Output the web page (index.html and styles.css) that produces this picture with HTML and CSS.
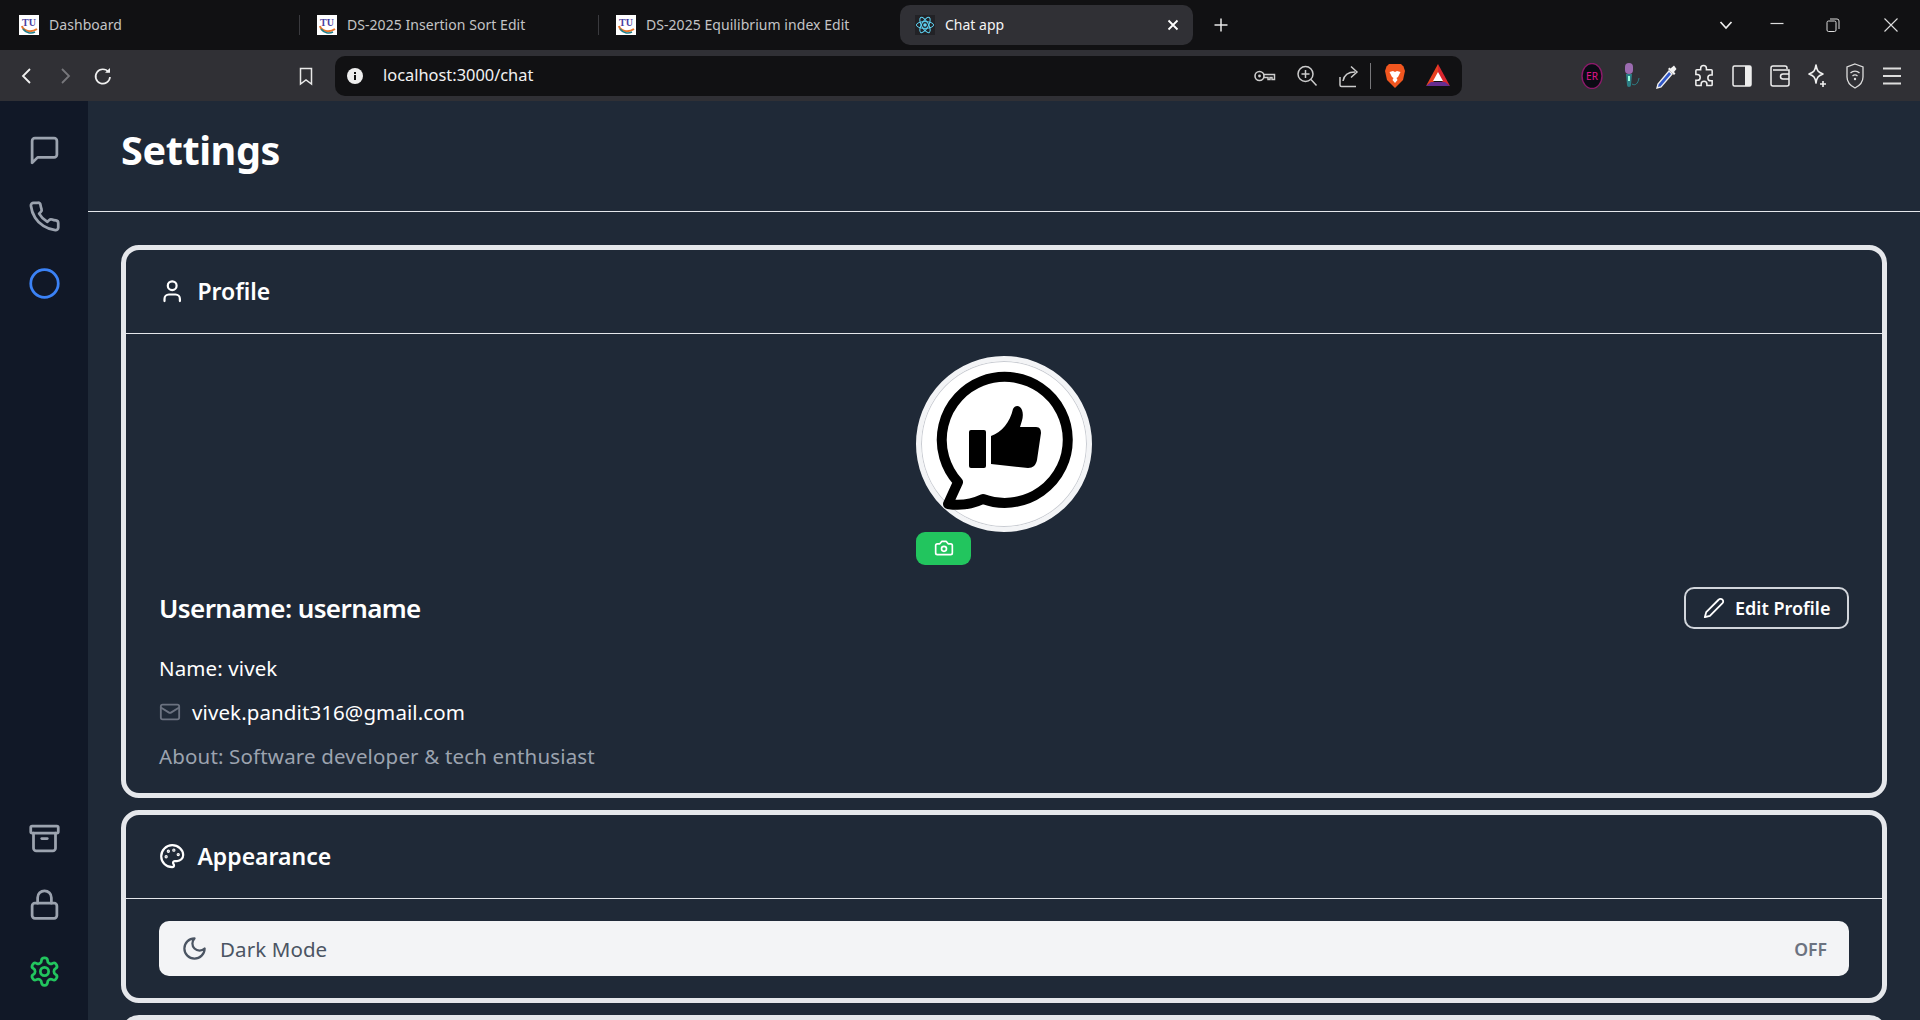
FILE: index.html
```html
<!DOCTYPE html>
<html lang="en">
<head>
    <meta charset="UTF-8">
    <meta name="viewport" content="width=device-width, initial-scale=1.0">
    <title>Chat app</title>
    <link rel="stylesheet" href="styles.css">
</head>
<body>

    <!-- browser tabs -->
    <div class="tabstrip">
        <div class="tab">
            <svg class="favicon" viewBox="0 0 20 20"><rect width="20" height="20" fill="#fff"/><text x="10" y="10.5" text-anchor="middle" class="tu">TU</text><path d="M3 11c1 5 9 7 15 3" fill="none" stroke="#e8742a" stroke-width="2"/><path d="M4 14c3 4 8 5 12 3" fill="none" stroke="#1f7f8c" stroke-width="1.6"/></svg>
            <span class="tab-title">Dashboard</span>
        </div>
        <div class="tab tab-sep">
            <svg class="favicon" viewBox="0 0 20 20"><rect width="20" height="20" fill="#fff"/><text x="10" y="10.5" text-anchor="middle" class="tu">TU</text><path d="M3 11c1 5 9 7 15 3" fill="none" stroke="#e8742a" stroke-width="2"/><path d="M4 14c3 4 8 5 12 3" fill="none" stroke="#1f7f8c" stroke-width="1.6"/></svg>
            <span class="tab-title">DS-2025 Insertion Sort Edit</span>
        </div>
        <div class="tab tab-sep">
            <svg class="favicon" viewBox="0 0 20 20"><rect width="20" height="20" fill="#fff"/><text x="10" y="10.5" text-anchor="middle" class="tu">TU</text><path d="M3 11c1 5 9 7 15 3" fill="none" stroke="#e8742a" stroke-width="2"/><path d="M4 14c3 4 8 5 12 3" fill="none" stroke="#1f7f8c" stroke-width="1.6"/></svg>
            <span class="tab-title">DS-2025 Equilibrium index Edit</span>
        </div>
        <div class="tab-active">
            <svg class="favicon" viewBox="0 0 20 20"><rect width="20" height="20" fill="#222226"/><g fill="none" stroke="#5ed3f3" stroke-width="1"><ellipse cx="10" cy="10" rx="8.6" ry="3.4"/><ellipse cx="10" cy="10" rx="8.6" ry="3.4" transform="rotate(60 10 10)"/><ellipse cx="10" cy="10" rx="8.6" ry="3.4" transform="rotate(120 10 10)"/></g><circle cx="10" cy="10" r="1.8" fill="#5ed3f3"/></svg>
            <span class="tab-title-active">Chat app</span>
            <svg class="tab-close" viewBox="0 0 12 12"><path d="M1.5 1.5l9 9M10.5 1.5l-9 9" stroke="#fff" stroke-width="1.8" fill="none"/></svg>
        </div>
        <svg class="tab-new" viewBox="0 0 16 16"><path d="M8 1.5v13M1.5 8h13" stroke="#e8e8e8" stroke-width="1.5" fill="none"/></svg>
        <div class="win-btns">
            <svg class="win-chevron" viewBox="0 0 14 14"><path d="M1.5 4l5.5 6 5.5-6" stroke="#eee" stroke-width="1.7" fill="none"/></svg>
            <svg class="win-min" viewBox="0 0 14 14"><path d="M0.5 5.5h13" stroke="#ddd" stroke-width="1.2" fill="none"/></svg>
            <svg class="win-restore" viewBox="0 0 14 14"><rect x="1" y="3" width="9" height="10.5" rx="1.5" stroke="#ddd" fill="none"/><path d="M4 1h7a2 2 0 0 1 2 2v8" stroke="#ddd" fill="none"/></svg>
            <svg class="win-close" viewBox="0 0 14 14"><path d="M0.5 0.5l13 13M13.5 0.5l-13 13" stroke="#ddd" stroke-width="1.1" fill="none"/></svg>
        </div>
    </div>

    <!-- browser toolbar -->
    <div class="toolbar">
        <div class="nav-btn"><svg width="20" height="20" viewBox="0 0 20 20"><path d="M13 3l-7 7 7 7" stroke="#f0f0f0" stroke-width="1.8" fill="none"/></svg></div>
        <div class="nav-btn"><svg width="20" height="20" viewBox="0 0 20 20"><path d="M7 3l7 7-7 7" stroke="#77777c" stroke-width="1.8" fill="none"/></svg></div>
        <div class="nav-btn"><svg width="20" height="20" viewBox="0 0 20 20"><path d="M15.5 6A7.2 7.2 0 1 0 17 11" stroke="#f0f0f0" stroke-width="1.7" fill="none"/><path d="M12 6.8h5V2z" fill="#f0f0f0"/></svg></div>
        <div class="nav-btn bookmark"><svg width="20" height="20" viewBox="0 0 20 20"><path d="M4.5 2.5h11v15.5L10 14l-5.500 4z" stroke="#e8e8e8" stroke-width="1.5" fill="none"/></svg></div>

        <div class="urlbar">
            <svg class="url-info" viewBox="0 0 16 16"><circle cx="8" cy="8" r="8" fill="#eee"/><rect x="7" y="7" width="2" height="5" fill="#111"/><rect x="7" y="4" width="2" height="2" fill="#111"/></svg>
            <span class="url-text">localhost:3000/chat</span>
            <div class="url-actions">
                <div class="url-btn"><svg width="22" height="14" viewBox="0 0 22 14"><circle cx="5.500" cy="7" r="4.500" stroke="#ccc" stroke-width="1.6" fill="none"/><circle cx="5.500" cy="7" r="1.400" fill="#ccc"/><path d="M10 5.500h10.500v5h-2.500v-2h-2v2h-2v-2H10" stroke="#ccc" stroke-width="1.500" fill="none"/></svg></div>
                <div class="url-btn"><svg width="22" height="22" viewBox="0 0 22 22"><circle cx="9.500" cy="9" r="7.500" stroke="#ccc" stroke-width="1.500" fill="none"/><path d="M15 14.500l5.500 6M9.500 5v8M5.500 9h8" stroke="#ccc" stroke-width="1.500" fill="none"/></svg></div>
                <div class="url-btn"><svg width="22" height="24" viewBox="0 0 22 24"><path d="M2 13v8a1.500 1.500 0 0 0 1.500 1.500H18" stroke="#ccc" stroke-width="1.500" fill="none"/><path d="M5 17c1-6 5-9 12-9M13 2.500L19 8l-6 5.500" stroke="#ccc" stroke-width="1.500" fill="none"/></svg></div>
                <div class="url-divider"></div>
                <div class="url-btn brave"><svg width="20" height="25" viewBox="0 0 20 25"><path d="M4 1h12l2.500 2.500L20 8l-2 9-8 8-8-8L0 8l1.500-4.500z" fill="#f1561f"/><path d="M4.500 9L8 8l2 1 2-1 3.500 1L13 14l-1.500 1 1 2L10 20l-2.500-3 1-2L7 14z" fill="#fff"/></svg></div>
                <div class="url-btn bat"><svg width="24" height="23" viewBox="0 0 24 23"><path d="M12 0L0 22l12-7z" fill="#e8401f"/><path d="M12 0l12 22-12-7z" fill="#d9252e"/><path d="M12 8l-5 9h10z" fill="#fff"/><path d="M0 22h24l-5-4H5z" fill="#662d91"/></svg></div>
            </div>
        </div>

        <div class="ext-icons">
            <div class="ext"><svg width="22" height="26" viewBox="0 0 22 26"><ellipse cx="11" cy="13" rx="10" ry="12.500" fill="#0b0b14" stroke="#8c1a6a" stroke-width="1.400"/><text x="11" y="17" text-anchor="middle" class="er">ER</text></svg></div>
            <div class="ext ext-mic"><svg width="18" height="27" viewBox="0 0 18 27"><rect x="2" y="1" width="8" height="11" rx="4" fill="#9b6bb0"/><path d="M3 12h6l-1 11a2 2 0 0 1-4 0z" fill="#2c7f86"/><path d="M9 22c3 2 6 0 7-6" stroke="#2c7f86" fill="none"/><rect x="5" y="14" width="2" height="5" fill="#9fd"/></svg></div>
            <div class="ext"><svg width="22" height="26" viewBox="0 0 22 26"><path d="M13 8l-11 13-1 4 4-1L16 11z" fill="#2f56c7" stroke="#eee" stroke-width="1.400"/><path d="M12 6l6 6 1.500-1.500-1.500-1.500 2.500-3-2.500-3.500-3.500 3-1-1z" fill="#f2f2f2"/></svg></div>
            <div class="ext"><svg width="23" height="26" viewBox="0 0 24 24"><path d="M8 4a3 3 0 0 1 6 0v1.500h5a1 1 0 0 1 1 1V11h-1.500a3 3 0 0 0 0 6H20v4a1 1 0 0 1-1 1h-4.500v-1.500a3 3 0 0 0-6 0V22H4a1 1 0 0 1-1-1v-4.500h1.500a3 3 0 0 0 0-6H3V6.500a1 1 0 0 1 1-1h4z" stroke="#f0f0f0" stroke-width="1.600" fill="none"/></svg></div>
            <div class="ext"><svg width="20" height="22" viewBox="0 0 20 22"><rect x="1" y="1" width="18" height="20" rx="1.500" stroke="#eee" stroke-width="1.500" fill="none"/><rect x="13" y="1" width="6" height="20" fill="#eee"/></svg></div>
            <div class="ext"><svg width="20" height="22" viewBox="0 0 20 22"><path d="M17 4V3a2 2 0 0 0-2-2H3a2 2 0 0 0-2 2v16a2 2 0 0 0 2 2h14a2 2 0 0 0 2-2V5H3" stroke="#eee" stroke-width="1.500" fill="none"/><path d="M19 9h-6a2.500 2.500 0 0 0 0 5h6" stroke="#eee" stroke-width="1.500" fill="none"/></svg></div>
            <div class="ext"><svg width="20" height="24" viewBox="0 0 20 24"><path d="M9 1c1 6 2 7 7 9-5 2-6 3-7 9-1-6-2-7-7-9 5-2 6-3 7-9z" stroke="#f0f0f0" stroke-width="1.600" fill="none" stroke-linejoin="round"/><path d="M16 17v6M13 20h6" stroke="#f0f0f0" stroke-width="1.600"/></svg></div>
            <div class="ext"><svg width="18" height="26" viewBox="0 0 18 26"><path d="M9 1l8 3v10c0 5-4 9-8 11-4-2-8-6-8-11V4z" stroke="#ddd" stroke-width="1.300" fill="none"/><path d="M4.500 10c2.500-2.500 6.500-2.500 9 0M6.500 13c1.500-1.300 3.500-1.300 5 0" stroke="#ddd" stroke-width="1.300" fill="none"/><circle cx="9" cy="16" r="1.200" fill="#ddd"/></svg></div>
            <div class="ext"><svg width="18" height="20" viewBox="0 0 18 20"><path d="M0 2.500h18M0 10h18M0 17.500h18" stroke="#ddd" stroke-width="2" fill="none"/></svg></div>
        </div>
    </div>

    <div class="app">

        <div class="sidebar">
            <div class="side-group">
                <svg class="side-icon" viewBox="0 0 24 24"><path d="M21 15a2 2 0 0 1-2 2H7l-4 4V5a2 2 0 0 1 2-2h14a2 2 0 0 1 2 2z"/></svg>
                <svg class="side-icon" viewBox="0 0 24 24"><path d="M22 16.920v3a2 2 0 0 1-2.180 2 19.790 19.790 0 0 1-8.630-3.070 19.500 19.500 0 0 1-6-6 19.790 19.790 0 0 1-3.070-8.670A2 2 0 0 1 4.110 2h3a2 2 0 0 1 2 1.720 12.840 12.840 0 0 0 .7 2.810 2 2 0 0 1-.45 2.110L8.090 9.910a16 16 0 0 0 6 6l1.270-1.270a2 2 0 0 1 2.110-.45 12.840 12.840 0 0 0 2.810.7A2 2 0 0 1 22 16.920z"/></svg>
                <svg class="side-icon side-blue" viewBox="0 0 24 24"><circle cx="12" cy="12" r="10"/></svg>
            </div>
            <div class="side-group">
                <svg class="side-icon" viewBox="0 0 24 24"><rect x="2" y="3" width="20" height="5" rx="1"/><path d="M4 8v11a2 2 0 0 0 2 2h12a2 2 0 0 0 2-2V8"/><path d="M10 12h4"/></svg>
                <svg class="side-icon" viewBox="0 0 24 24"><rect x="3" y="11" width="18" height="11" rx="2"/><path d="M7 11V7a5 5 0 0 1 10 0v4"/></svg>
                <svg class="side-icon side-green" viewBox="0 0 24 24"><path d="M12.220 2h-.44a2 2 0 0 0-2 2v.18a2 2 0 0 1-1 1.730l-.43.25a2 2 0 0 1-2 0l-.15-.08a2 2 0 0 0-2.730.73l-.22.38a2 2 0 0 0 .73 2.730l.15.1a2 2 0 0 1 1 1.720v.51a2 2 0 0 1-1 1.740l-.15.09a2 2 0 0 0-.73 2.730l.22.38a2 2 0 0 0 2.730.73l.15-.08a2 2 0 0 1 2 0l.43.25a2 2 0 0 1 1 1.730V20a2 2 0 0 0 2 2h.44a2 2 0 0 0 2-2v-.18a2 2 0 0 1 1-1.730l.43-.25a2 2 0 0 1 2 0l.15.08a2 2 0 0 0 2.730-.73l.22-.39a2 2 0 0 0-.73-2.730l-.15-.08a2 2 0 0 1-1-1.740v-.5a2 2 0 0 1 1-1.740l.15-.09a2 2 0 0 0 .73-2.730l-.22-.38a2 2 0 0 0-2.730-.73l-.15.08a2 2 0 0 1-2 0l-.43-.25a2 2 0 0 1-1-1.730V4a2 2 0 0 0-2-2z"/><circle cx="12" cy="12" r="3"/></svg>
            </div>
        </div>

        <div class="main">
            <div class="page-head">
                <h1 class="page-title">Settings</h1>
            </div>

            <div class="cards">

                <section class="card">
                    <div class="card-head">
                        <svg class="head-icon" viewBox="0 0 24 24"><path d="M19 21v-2a4 4 0 0 0-4-4H9a4 4 0 0 0-4 4v2"/><circle cx="12" cy="7" r="4"/></svg>
                        <h2 class="card-title">Profile</h2>
                    </div>
                    <div class="profile-body">
                        <div class="avatar-wrap">
                            <div class="avatar">
                                <svg width="166" height="166" viewBox="5 5 166 166">
                                    <path d="M42 126.100A63 63 0 1 1 67 143Q50 151 32 148Z" fill="none" stroke="#000" stroke-width="10" stroke-linejoin="round"/>
                                    <rect x="53" y="74" width="17" height="38" rx="2" fill="#000"/>
                                    <path d="M75 80C86 76 94 66 97 53C99 49 104 49 106 54C108 60 106 65 104 71L120 71C124 71 125 74 125 77L121 104C120 109 117 112 112 112L75 108Z" fill="#000"/>
                                </svg>
                            </div>
                            <button class="camera-btn">
                                <svg class="cam-icon" viewBox="0 0 24 24"><path d="M14.500 4h-5L7 7H4a2 2 0 0 0-2 2v9a2 2 0 0 0 2 2h16a2 2 0 0 0 2-2V9a2 2 0 0 0-2-2h-3l-2.500-3z"/><circle cx="12" cy="13" r="3"/></svg>
                            </button>
                        </div>

                        <div class="user-row">
                            <h3 class="username">Username: username</h3>
                            <button class="edit-btn">
                                <svg class="edit-icon" viewBox="0 0 24 24"><path d="M17 3a2.850 2.830 0 1 1 4 4L7.500 20.500 2 22l1.500-5.500L17 3z"/></svg>
                                Edit Profile
                            </button>
                        </div>

                        <p class="info-line">Name: vivek</p>
                        <p class="info-line">
                            <svg class="mail-icon" viewBox="0 0 24 24"><rect x="2" y="4" width="20" height="16" rx="2"/><path d="m22 7-8.970 5.700a1.940 1.940 0 0 1-2.060 0L2 7"/></svg>
                            vivek.pandit316@gmail.com
                        </p>
                        <p class="info-line info-muted">About: Software developer &amp; tech enthusiast</p>
                    </div>
                </section>

                <section class="card">
                    <div class="card-head">
                        <svg class="head-icon" viewBox="0 0 24 24"><circle cx="13.500" cy="6.500" r=".5" fill="#fff"/><circle cx="17.500" cy="10.500" r=".5" fill="#fff"/><circle cx="8.500" cy="7.500" r=".5" fill="#fff"/><circle cx="6.500" cy="12.500" r=".5" fill="#fff"/><path d="M12 2C6.500 2 2 6.500 2 12s4.500 10 10 10c.926 0 1.648-.746 1.648-1.688 0-.437-.18-.835-.437-1.125-.29-.289-.438-.652-.438-1.125a1.640 1.640 0 0 1 1.668-1.668h1.996c3.051 0 5.555-2.503 5.555-5.554C21.965 6.012 17.461 2 12 2z"/></svg>
                        <h2 class="card-title">Appearance</h2>
                    </div>
                    <div class="appearance-body">
                        <div class="toggle-row">
                            <svg class="moon-icon" viewBox="0 0 24 24"><path d="M12 3a6 6 0 0 0 9 9 9 9 0 1 1-9-9Z"/></svg>
                            <span class="toggle-label">Dark Mode</span>
                            <span class="toggle-state">OFF</span>
                        </div>
                    </div>
                </section>

                <section class="card card-empty"></section>

            </div>
        </div>

    </div>

</body>
</html>
```

FILE: styles.css
```css
* {
    margin: 0;
    padding: 0;
    box-sizing: border-box;
}
html, body {
    width: 100%;
    height: 100%;
    overflow: hidden;
}
body {
    display: flex;
    flex-direction: column;
    font-family: "Noto Sans", "Open Sans", sans-serif;
    background-color: #1f2937;
    color: #fff;
}

/* browser chrome */
.tabstrip {
    height: 50px;
    flex-shrink: 0;
    display: flex;
    align-items: center;
    background-color: #111113;
    font-size: 14px;
    color: #c4c4c6;
}
.tab {
    width: 299px;
    height: 20px;
    display: flex;
    align-items: center;
    padding-left: 19px;
}
.tab-sep {
    border-left: 1px solid #3a3a3e;
    padding-left: 17px;
}
.favicon {
    width: 20px;
    height: 20px;
    flex-shrink: 0;
}
.tu {
    font-family: "Liberation Serif", serif;
    font-size: 10px;
    font-weight: bold;
    fill: #4a3f9f;
}
.tab-title {
    margin-left: 10px;
    margin-bottom: 2px;
    letter-spacing: 0.05px;
}
.tab-active {
    width: 293px;
    height: 40px;
    margin-left: 3px;
    padding: 0 14px 0 15px;
    display: flex;
    align-items: center;
    background-color: #303035;
    border-radius: 10px;
    color: #f4f4f4;
}
.tab-title-active {
    margin-left: 10px;
    margin-bottom: 2px;
    flex: 1;
}
.tab-close {
    width: 12px;
    height: 12px;
}
.tab-new {
    width: 16px;
    height: 16px;
    margin-left: 20px;
}
.win-btns {
    display: flex;
    align-items: center;
    margin-left: auto;
}
.win-chevron {
    width: 14px;
    height: 14px;
    margin-right: 37px;
}
.win-min {
    width: 14px;
    height: 14px;
    margin-right: 42px;
}
.win-restore {
    width: 14px;
    height: 14px;
    margin-right: 44px;
}
.win-close {
    width: 14px;
    height: 14px;
    margin-right: 22px;
}

.toolbar {
    height: 51px;
    flex-shrink: 0;
    display: flex;
    align-items: center;
    padding: 0 9px 0 8px;
    background-color: #303035;
}
.nav-btn {
    width: 38px;
    height: 38px;
    display: flex;
    align-items: center;
    justify-content: center;
}
.bookmark {
    margin-left: 165px;
}
.urlbar {
    width: 1127px;
    height: 40px;
    margin-left: 10px;
    padding-left: 12px;
    padding-right: 5px;
    display: flex;
    align-items: center;
    background-color: #111113;
    border-radius: 10px;
}
.url-info {
    width: 16px;
    height: 16px;
}
.url-text {
    margin-left: 20px;
    margin-bottom: 2px;
    font-size: 16.4px;
    color: #f2f2f2;
}
.url-actions {
    margin-left: auto;
    display: flex;
    align-items: center;
}
.url-btn {
    width: 42px;
    display: flex;
    align-items: center;
    justify-content: center;
}
.url-divider {
    width: 1px;
    height: 26px;
    background-color: #77777a;
}
.brave {
    width: 48px;
}
.bat {
    width: 38px;
}
.ext-icons {
    margin-left: auto;
    display: flex;
    align-items: center;
}
.ext {
    width: 37.5px;
    display: flex;
    align-items: center;
    justify-content: center;
}
.ext-mic {
    padding-left: 5px;
}
.er {
    font-size: 10px;
    fill: #e0148c;
}

/* the app */
.app {
    flex: 1;
    min-height: 0;
    display: flex;
}
.sidebar {
    width: 88px;
    flex-shrink: 0;
    display: flex;
    flex-direction: column;
    justify-content: space-between;
    align-items: center;
    padding: 32.5px 0;
    background-color: #111827;
}
.side-group {
    display: flex;
    flex-direction: column;
    gap: 33.5px;
}
.side-icon {
    display: block;
    width: 33px;
    height: 33px;
    fill: none;
    stroke: #9ca3af;
    stroke-width: 2;
    stroke-linecap: round;
    stroke-linejoin: round;
}
.side-blue {
    stroke: #3b82f6;
}
.side-green {
    stroke: #22c55e;
}

.main {
    flex: 1;
    min-width: 0;
}
.page-head {
    height: 111px;
    display: flex;
    align-items: center;
    padding: 0 33px 12px;
    border-bottom: 1px solid #e5e7eb;
}
.page-title {
    font-size: 39.6px;
    font-weight: 700;
    letter-spacing: -0.4px;
}
.cards {
    display: flex;
    flex-direction: column;
    gap: 12px;
    padding: 33px 33px 0;
}
.card {
    border: 5px solid #e5e7eb;
    border-radius: 18px;
}
.card-empty {
    height: 100px;
}
.card-head {
    height: 84px;
    display: flex;
    align-items: center;
    gap: 12px;
    padding: 0 33px;
    border-bottom: 1px solid #e5e7eb;
}
.head-icon {
    width: 26.4px;
    height: 26.4px;
    fill: none;
    stroke: #fff;
    stroke-width: 2;
    stroke-linecap: round;
    stroke-linejoin: round;
}
.card-title {
    margin-bottom: 2px;
    font-size: 23px;
    font-weight: 600;
}

.profile-body {
    padding: 22px 33px 15px;
}
.avatar-wrap {
    width: 176px;
    margin: 0 auto;
}
.avatar {
    width: 176px;
    height: 176px;
    display: flex;
    align-items: center;
    justify-content: center;
    border-radius: 50%;
    background-color: #fff;
    border: 5px solid #f3f4f6;
    box-shadow: inset 0 0 0 1px #c9ccd2;
}
.camera-btn {
    width: 55px;
    height: 33px;
    display: flex;
    align-items: center;
    justify-content: center;
    border: none;
    border-radius: 9px;
    background-color: #22c55e;
}
.cam-icon {
    width: 20px;
    height: 20px;
    margin-bottom: 2px;
    fill: none;
    stroke: #fff;
    stroke-width: 2;
    stroke-linecap: round;
    stroke-linejoin: round;
}
.user-row {
    display: flex;
    align-items: center;
    justify-content: space-between;
    margin-top: 22px;
    margin-bottom: 17px;
}
.username {
    font-size: 26px;
    font-weight: 600;
    letter-spacing: -0.6px;
}
.edit-btn {
    width: 165px;
    height: 42px;
    display: flex;
    align-items: center;
    gap: 10px;
    padding-left: 17px;
    background: none;
    border: 2px solid #d1d5db;
    border-radius: 10px;
    color: #fff;
    font-family: inherit;
    font-size: 18px;
    font-weight: 600;
}
.edit-icon {
    width: 22px;
    height: 22px;
    fill: none;
    stroke: #fff;
    stroke-width: 2;
    stroke-linecap: round;
    stroke-linejoin: round;
}
.info-line {
    height: 44px;
    display: flex;
    align-items: center;
    gap: 11px;
    font-size: 20.5px;
    letter-spacing: 0.1px;
}
.info-muted {
    color: #9ca3af;
    letter-spacing: 0.16px;
}
.mail-icon {
    width: 22px;
    height: 22px;
    fill: none;
    stroke: #6b7280;
    stroke-width: 2;
    stroke-linecap: round;
    stroke-linejoin: round;
}

.appearance-body {
    padding: 22px 33px;
}
.toggle-row {
    height: 55px;
    display: flex;
    align-items: center;
    gap: 12px;
    padding: 0 22px 0 22px;
    background-color: #f3f4f6;
    border-radius: 10px;
}
.moon-icon {
    width: 27px;
    height: 27px;
    fill: none;
    stroke: #4b5563;
    stroke-width: 2;
    stroke-linecap: round;
    stroke-linejoin: round;
}
.toggle-label {
    font-size: 20.5px;
    color: #4b5563;
    letter-spacing: 0.1px;
}
.toggle-state {
    margin-left: auto;
    font-size: 17.6px;
    font-weight: 600;
    color: #6b7280;
}
```
